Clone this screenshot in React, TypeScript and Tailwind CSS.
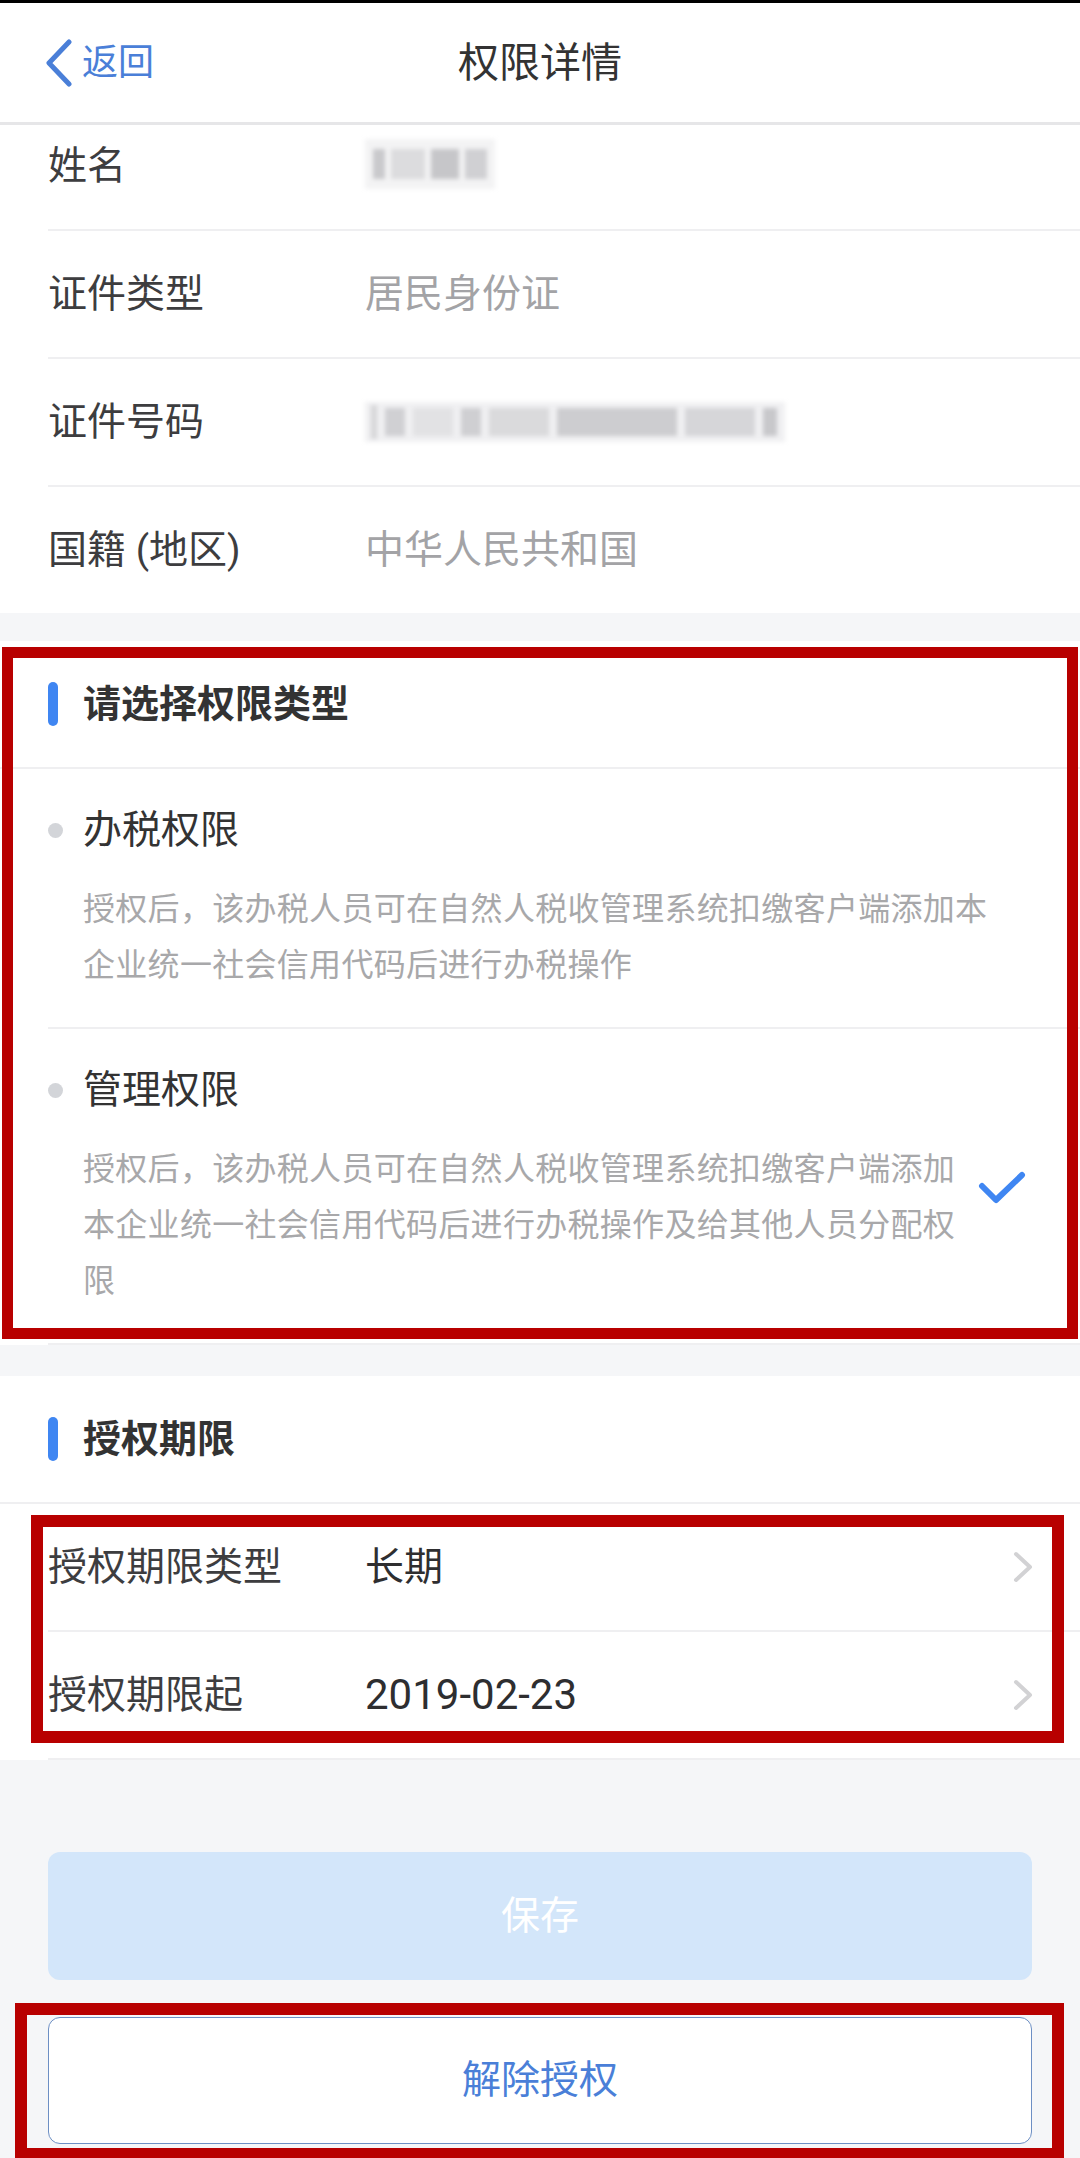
import React from 'react'

const font = { fontFamily: 'Roboto, "Noto Sans CJK SC", sans-serif' }

function Divider({ inset = true }: { inset?: boolean }) {
  return <div className={`h-[2px] bg-[#efeff1] ${inset ? 'ml-[48px]' : ''}`} />
}

function Blur({ blocks, className }: { blocks: string[]; className: string }) {
  return (
    <div className={`flex items-center blur-[2px] ${className}`}>
      {blocks.map((c, i) => (
        <span key={i} className={c} />
      ))}
    </div>
  )
}

function InfoRow({ label, value, first }: { label: string; value?: React.ReactNode; first?: boolean }) {
  return (
    <div className={first ? 'flex h-[104px] items-start pt-[18px]' : 'flex h-[126px] items-center'}>
      <div className="w-[365px] shrink-0 pl-[48px] text-[39px] leading-[46px] text-[#3d3d3f]">{label}</div>
      <div className="text-[39px] leading-[46px] text-[#a3a3a6]">{value}</div>
    </div>
  )
}

function SectionTitle({ children }: { children: string }) {
  return (
    <div className="flex h-[126px] items-center pl-[48px]">
      <span className="h-[44px] w-[10px] rounded-full bg-[#3f86f2]" />
      <span className="ml-[25px] text-[38px] font-bold leading-[46px] text-[#333]">{children}</span>
    </div>
  )
}

function Option({ title, desc, width, checked }: { title: string; desc: string; width: string; checked?: boolean }) {
  return (
    <div className="flex items-center pl-[48px] pr-[54px] pb-[34px] pt-[38px]">
      <div className="flex-1">
        <div className="flex items-center">
          <span className="h-[15px] w-[15px] rounded-full bg-[#d3d5d9]" />
          <span className="ml-[20px] text-[39px] leading-[46px] text-[#333]">{title}</span>
        </div>
        <p className={`ml-[35px] mt-[28px] text-[32px] leading-[56px] tracking-[0.3px] text-[#a8a8aa] ${width}`}>{desc}</p>
      </div>
      {checked && (
        <svg width="48" height="34" viewBox="0 0 48 34" fill="none" className="shrink-0">
          <path d="M4 15 L18 29 L44 4" stroke="#3f86f2" strokeWidth="6" strokeLinecap="round" strokeLinejoin="round" />
        </svg>
      )}
    </div>
  )
}

function PickRow({ label, value, valueSize }: { label: string; value: string; valueSize: string }) {
  return (
    <div className="flex h-[126px] items-center pr-[46px]">
      <div className="w-[365px] shrink-0 pl-[48px] text-[39px] leading-[46px] text-[#3d3d3f]">{label}</div>
      <div className={`flex-1 leading-[46px] text-[#2e2e30] ${valueSize}`}>{value}</div>
      <svg width="22" height="32" viewBox="0 0 22 32" fill="none">
        <path d="M4 3 L18 16 L4 29" stroke="#d2d2d4" strokeWidth="4" strokeLinecap="round" strokeLinejoin="round" />
      </svg>
    </div>
  )
}

const desc1 = '授权后，该办税人员可在自然人税收管理系统扣缴客户端添加本企业统一社会信用代码后进行办税操作'
const desc2 = '授权后，该办税人员可在自然人税收管理系统扣缴客户端添加本企业统一社会信用代码后进行办税操作及给其他人员分配权限'

export default function App() {
  return (
    <div style={font} className="relative h-[2158px] w-[1080px] overflow-hidden bg-[#f5f6f8]">
      {/* header */}
      <div className="h-[3px] bg-black" />
      <header className="relative flex h-[122px] items-center justify-center border-b-[3px] border-[#e6e6e8] bg-white">
        <div className="absolute inset-y-0 left-[45px] flex items-center">
          <svg width="28" height="48" viewBox="0 0 28 48" fill="none">
            <path d="M24 3 L4 24 L24 45" stroke="#4a7fd8" strokeWidth="5" strokeLinecap="round" strokeLinejoin="round" />
          </svg>
          <span className="ml-[9px] text-[36px] leading-[44px] text-[#4a7fd8]">返回</span>
        </div>
        <h1 className="text-[41px] font-normal leading-[50px] text-[#333]">权限详情</h1>
      </header>

      {/* personal info */}
      <section className="bg-white">
        <InfoRow
          first
          label="姓名"
          value={
            <Blur
              className="mt-[-4px] h-[50px] w-[130px] gap-[6px] bg-[#f3f3f4] px-[8px]"
              blocks={['h-[30px] w-[12px] bg-[#c9c9cc]', 'h-[30px] w-[34px] bg-[#dcdcde]', 'h-[30px] w-[28px] bg-[#c6c6c9]', 'h-[30px] w-[22px] bg-[#d0d0d3]']}
            />
          }
        />
        <Divider />
        <InfoRow label="证件类型" value="居民身份证" />
        <Divider />
        <InfoRow
          label="证件号码"
          value={
            <Blur
              className="h-[40px] w-[420px] gap-[8px] bg-[#f0f0f2] px-[6px]"
              blocks={[
                'h-[34px] w-[6px] bg-[#d6d6d8]',
                'h-[28px] w-[20px] bg-[#d0d0d3]',
                'h-[28px] w-[40px] bg-[#e2e2e4]',
                'h-[28px] w-[20px] bg-[#cfcfd2]',
                'h-[28px] w-[60px] bg-[#dadadc]',
                'h-[28px] w-[120px] bg-[#cdcdd0]',
                'h-[28px] w-[70px] bg-[#d6d6d9]',
                'h-[28px] w-[14px] bg-[#c8c8cb]',
              ]}
            />
          }
        />
        <Divider />
        <InfoRow label="国籍 (地区)" value="中华人民共和国" />
      </section>

      {/* permission type */}
      <section className="mt-[28px] bg-white">
        <SectionTitle>请选择权限类型</SectionTitle>
        <Divider inset={false} />
        <Option title="办税权限" desc={desc1} width="w-[920px]" />
        <Divider />
        <Option title="管理权限" desc={desc2} width="w-[890px]" checked />
        <Divider />
      </section>

      {/* authorization period */}
      <section className="mt-[31px] bg-white">
        <SectionTitle>授权期限</SectionTitle>
        <Divider inset={false} />
        <PickRow label="授权期限类型" value="长期" valueSize="text-[39px]" />
        <Divider />
        <PickRow label="授权期限起" value="2019-02-23" valueSize="text-[42px]" />
        <Divider />
      </section>

      {/* buttons */}
      <div className="mx-[48px] mt-[92px] flex flex-col gap-[37px]">
        <button className="flex h-[128px] items-center justify-center rounded-[12px] bg-[#d3e6fa] text-[39px] text-white">保存</button>
        <button className="flex h-[127px] items-center justify-center rounded-[12px] border border-[#6d8fc4] bg-white text-[39px] text-[#4a7fd8]">
          解除授权
        </button>
      </div>

      {/* red annotation boxes */}
      <div className="pointer-events-none absolute left-[2px] top-[647px] h-[692px] w-[1076px] border-[11px] border-[#b80000]" />
      <div className="pointer-events-none absolute left-[31px] top-[1515px] h-[228px] w-[1033px] border-[12px] border-[#b80000]" />
      <div className="pointer-events-none absolute left-[15px] top-[2003px] h-[157px] w-[1049px] border-[12px] border-[#b80000]" />
    </div>
  )
}
